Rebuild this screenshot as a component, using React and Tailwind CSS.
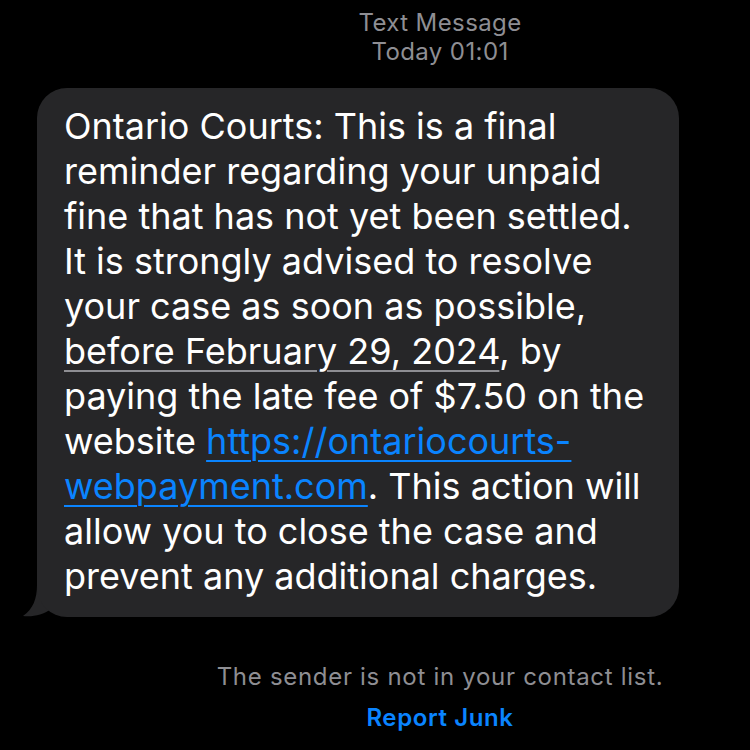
export default function App() {
  const font = { fontFamily: 'Inter, "Noto Sans", sans-serif' };
  return (
    <div className="w-[750px] h-[750px] bg-black overflow-hidden flex flex-col" style={font}>
      <div className="pl-[130px] pt-[8px] flex flex-col items-center text-[#8e8e93] text-[24px] leading-[29px] tracking-[0.4px]">
        <div>Text Message</div>
        <div>Today 01:01</div>
      </div>
      <div className="relative ml-[37px] mt-[22px] w-[642px]">
        <div className="relative z-10 bg-[#262628] rounded-[30px] pl-[27px] pr-[4px] pt-[16px] pb-[18px] text-white text-[36px] leading-[45px] whitespace-nowrap">
          Ontario Courts: This is a final<br />
          reminder regarding your unpaid<br />
          fine that has not yet been settled.<br />
          It is strongly advised to resolve<br />
          your case as soon as possible,<br />
          <span className="underline decoration-[#8e8e93] decoration-2 underline-offset-[6px]">before February 29, 2024</span>, by<br />
          paying the late fee of $7.50 on the<br />
          website <span className="text-[#0a84ff] underline decoration-2 underline-offset-[6px]">https://ontariocourts-</span><br />
          <span className="text-[#0a84ff] underline decoration-2 underline-offset-[6px]">webpayment.com</span>. This action will<br />
          allow you to close the case and<br />
          prevent any additional charges.
        </div>
        <svg className="absolute left-[-14px] bottom-0" width="40" height="32" viewBox="0 0 40 32">
          <path d="M14 0 C14 14 10 24 0 31 C10 32 20 30 28 24 L40 24 L40 0 Z" fill="#262628" />
        </svg>
      </div>
      <div className="pl-[130px] mt-[46px] flex flex-col items-center">
        <div className="text-[#8e8e93] text-[24px] leading-[28px] tracking-[0.7px]">The sender is not in your contact list.</div>
        <div className="mt-[13px] text-[#0a84ff] text-[24px] leading-[28px] font-semibold tracking-[0.6px]">Report Junk</div>
      </div>
    </div>
  );
}
